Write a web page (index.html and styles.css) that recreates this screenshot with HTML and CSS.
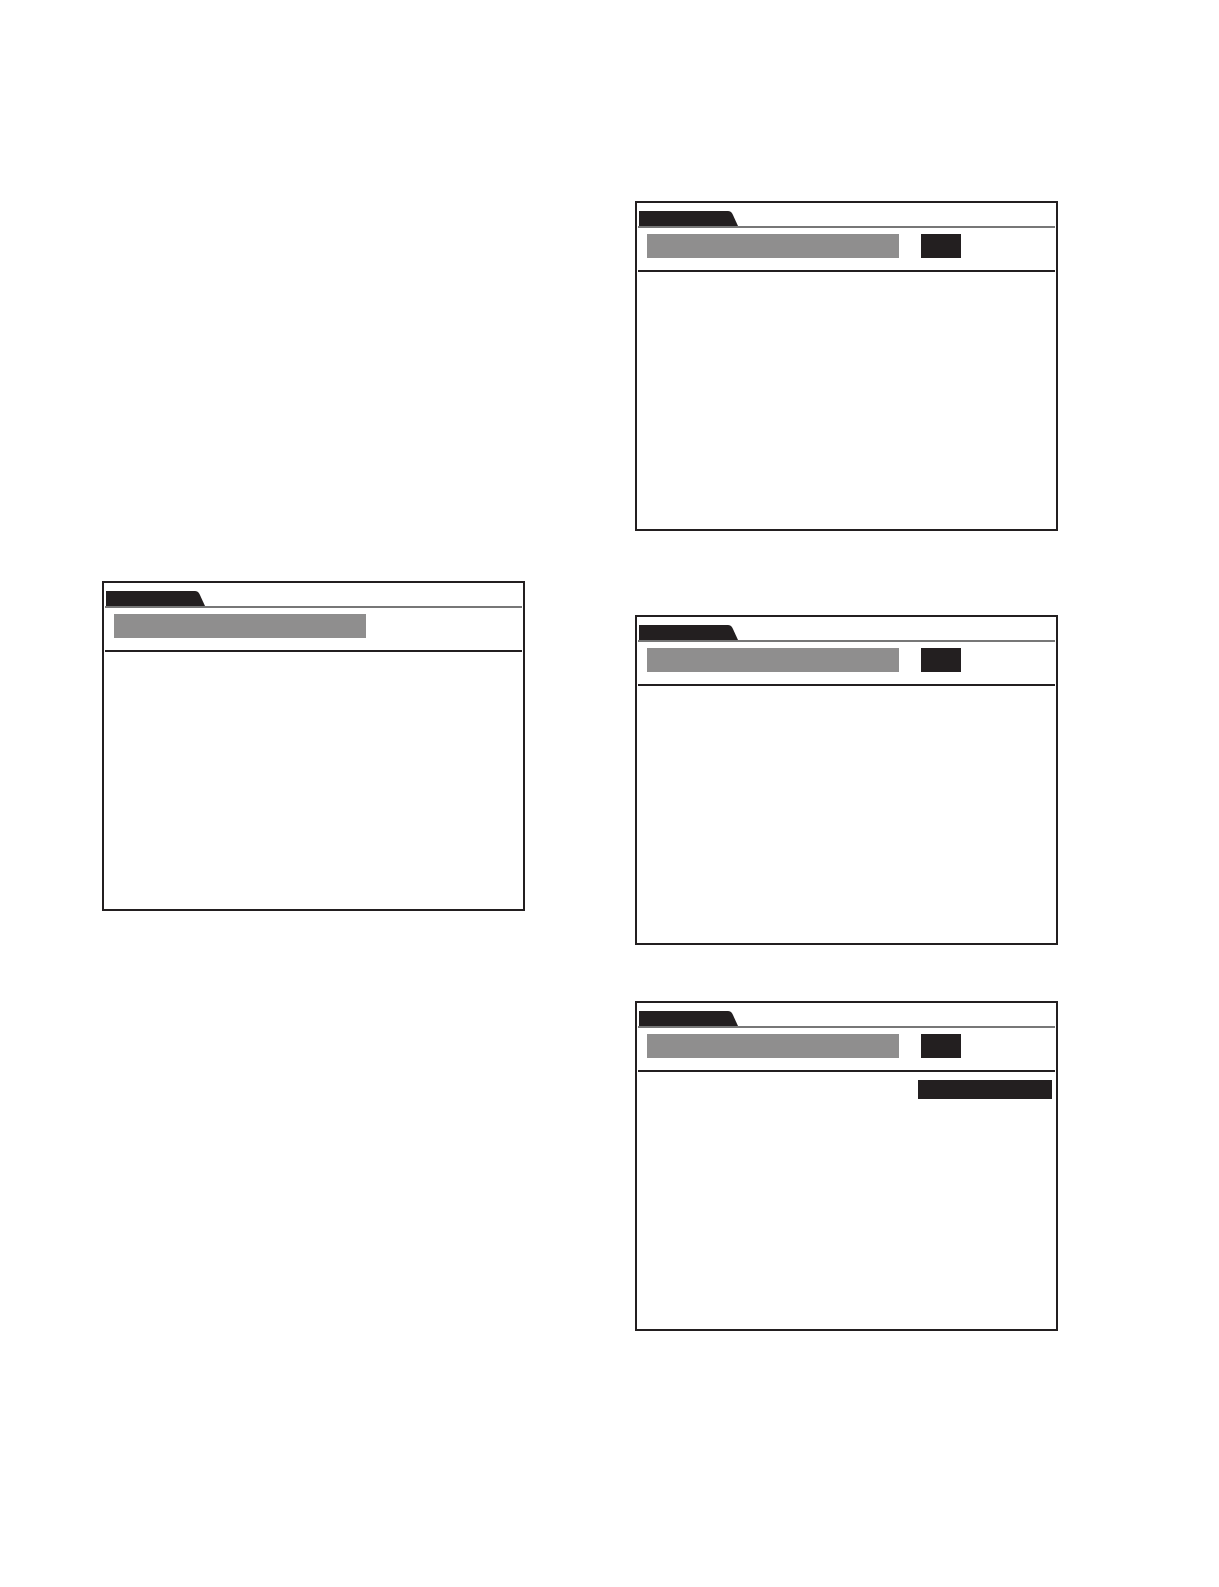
FILE: index.html
```html
<!DOCTYPE html>
<html lang="en">
<head>
<meta charset="utf-8">
<title>Panels</title>
<link rel="stylesheet" href="styles.css">
</head>
<body>
<div class="page">
  <div class="col col-left">
    <section class="panel">
      <div class="panel-head">
        <svg class="tab" width="99" height="15" viewBox="0 0 99 15"><path d="M0 0 H89 Q92 0 93.5 3 L99 15 H0 Z" fill="#231f20"/></svg>
      </div>
      <div class="bar-row">
        <div class="field"></div>
      </div>
      <div class="rule"></div>
    </section>
  </div>
  <div class="col col-right">
    <section class="panel">
      <div class="panel-head">
        <svg class="tab" width="99" height="15" viewBox="0 0 99 15"><path d="M0 0 H89 Q92 0 93.5 3 L99 15 H0 Z" fill="#231f20"/></svg>
      </div>
      <div class="bar-row">
        <div class="field"></div>
        <div class="btn"></div>
      </div>
      <div class="rule"></div>
    </section>
    <section class="panel panel-second">
      <div class="panel-head">
        <svg class="tab" width="99" height="15" viewBox="0 0 99 15"><path d="M0 0 H89 Q92 0 93.5 3 L99 15 H0 Z" fill="#231f20"/></svg>
      </div>
      <div class="bar-row">
        <div class="field"></div>
        <div class="btn"></div>
      </div>
      <div class="rule"></div>
    </section>
    <section class="panel panel-third">
      <div class="panel-head">
        <svg class="tab" width="99" height="15" viewBox="0 0 99 15"><path d="M0 0 H89 Q92 0 93.5 3 L99 15 H0 Z" fill="#231f20"/></svg>
      </div>
      <div class="bar-row">
        <div class="field"></div>
        <div class="btn"></div>
      </div>
      <div class="rule"></div>
      <div class="highlight"></div>
    </section>
  </div>
</div>
</body>
</html>
```
FILE: styles.css
```css
html, body {
  margin: 0;
  padding: 0;
  background: #ffffff;
  font-family: "Liberation Sans", Arial, sans-serif;
}

.page {
  display: flex;
  align-items: flex-start;
  padding-left: 102px;
  gap: 110px;
}

.col {
  display: flex;
  flex-direction: column;
}

.col-left {
  padding-top: 581px;
}

.col-right {
  padding-top: 201px;
}

.panel {
  box-sizing: border-box;
  width: 423px;
  height: 330px;
  border: 2px solid #231f20;
  padding: 8px 1px 0;
  display: flex;
  flex-direction: column;
}

.panel-second {
  margin-top: 84px;
}

.panel-third {
  margin-top: 56px;
}

.panel-head {
  display: flex;
  align-items: flex-end;
  height: 15px;
  border-bottom: 2px solid #777777;
}

.tab {
  display: block;
  margin-left: 1px;
}

.bar-row {
  display: flex;
  gap: 22px;
  margin-top: 6px;
  padding-left: 9px;
}

.field {
  width: 252px;
  height: 24px;
  background: #8f8e8e;
}

.btn {
  width: 40px;
  height: 24px;
  background: #231f20;
}

.rule {
  margin-top: 12px;
  height: 2px;
  background: #231f20;
}

.highlight {
  align-self: flex-end;
  width: 134px;
  height: 19px;
  margin-top: 8px;
  margin-right: 3px;
  background: #231f20;
}
```
